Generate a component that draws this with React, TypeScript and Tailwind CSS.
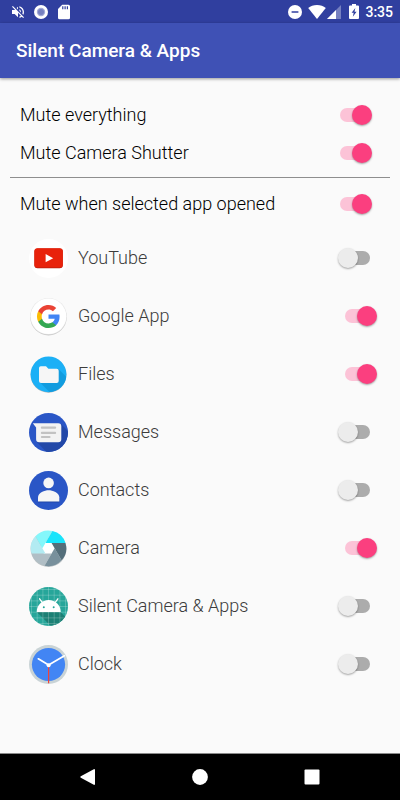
import { useState, type ReactNode } from 'react';

function YouTubeIcon() {
  return (
    <svg viewBox="0 0 39 39" className="size-full">
      <circle cx="19.5" cy="19.5" r="19.5" fill="#fff" />
      <rect x="5.4" y="9.6" width="28.4" height="19.6" rx="3.2" fill="#b71c0c" />
      <rect x="5.4" y="9.2" width="28.4" height="19.4" rx="3.2" fill="#e8220b" />
      <path d="M16.6 15.1v8.2l7.6-4.1z" fill="#fff" />
    </svg>
  );
}

function GoogleIcon() {
  return (
    <svg viewBox="0 0 39 39" className="size-full">
      <circle cx="19.5" cy="20.2" r="18.2" fill="#c8c8c8" />
      <circle cx="19.5" cy="19.3" r="18.3" fill="#e8e8e8" />
      <circle cx="19.5" cy="19.3" r="17.8" fill="#fff" />
      <g transform="translate(6.9 6.9) scale(1.05)">
        <path fill="#4285f4" d="M22.56 12.25c0-.78-.07-1.53-.2-2.25H12v4.26h5.92c-.26 1.37-1.04 2.53-2.21 3.31v2.77h3.57c2.08-1.92 3.28-4.74 3.28-8.09z" />
        <path fill="#34a853" d="M12 23c2.97 0 5.46-.98 7.28-2.66l-3.57-2.77c-.98.66-2.23 1.06-3.71 1.06-2.86 0-5.29-1.93-6.16-4.53H2.18v2.84C3.99 20.53 7.7 23 12 23z" />
        <path fill="#fbbc05" d="M5.84 14.09c-.22-.66-.35-1.36-.35-2.09s.13-1.43.35-2.09V7.07H2.18C1.43 8.55 1 10.22 1 12s.43 3.45 1.18 4.93l3.66-2.84z" />
        <path fill="#ea4335" d="M12 5.38c1.62 0 3.06.56 4.21 1.64l3.15-3.15C17.45 2.09 14.97 1 12 1 7.7 1 3.99 3.47 2.18 7.07l3.66 2.84c.87-2.6 3.3-4.53 6.16-4.53z" />
      </g>
    </svg>
  );
}

function FilesIcon() {
  return (
    <svg viewBox="0 0 39 39" className="size-full">
      <clipPath id="files-clip">
        <circle cx="19.5" cy="19.3" r="17.9" />
      </clipPath>
      <circle cx="19.5" cy="19.8" r="17.9" fill="#a9b4b8" />
      <g clipPath="url(#files-clip)">
        <rect width="39" height="39" fill="#1cb0f6" />
        <path d="M10.5 27 29.5 14l12 12v14H23.5z" fill="#129cdf" />
        <path d="M11.8 11.2H17l2.4 2.5h8.3a2 2 0 0 1 2 2v10.4a2 2 0 0 1-2 2H12a2 2 0 0 1-2-2V13a1.8 1.8 0 0 1 1.8-1.8z" fill="#f6f6f6" />
      </g>
    </svg>
  );
}

function MessagesIcon() {
  return (
    <svg viewBox="0 0 39 39" className="size-full">
      <clipPath id="messages-clip">
        <circle cx="19.5" cy="19.5" r="19.5" />
      </clipPath>
      <g clipPath="url(#messages-clip)">
        <rect width="39" height="39" fill="#2a56c6" />
        <path d="M7.5 28.5 32 11l12 12v20H21z" fill="#2248a8" />
        <path d="M3.8 10.2h25.5a3 3 0 0 1 3 3v13.1a3 3 0 0 1-3 3H10.1a3 3 0 0 1-3-3V14.6z" fill="#f3f3f3" />
        <path d="M12.9 14.7h13.2M12.9 19.9h13.2M12.9 24h7.6" stroke="#c2c2c2" strokeWidth="2.2" strokeLinecap="round" />
      </g>
    </svg>
  );
}

function ContactsIcon() {
  return (
    <svg viewBox="0 0 39 39" className="size-full">
      <circle cx="19.5" cy="19.5" r="19.5" fill="#2a56c6" />
      <path d="M9 31.3h21.3v-1H9z" fill="#1d3f96" />
      <circle cx="19.6" cy="11.9" r="5.3" fill="#f6f6f6" />
      <path d="M9 30.6v-4.4c0-4.6 6.8-7 10.6-7s10.7 2.4 10.7 7v4.4z" fill="#f6f6f6" />
    </svg>
  );
}

const blades = ['#18e4fb', '#546e7a', '#78909c', '#b0bec5', '#b2ebf2', '#84f7fb'];

function CameraIcon() {
  return (
    <svg viewBox="0 0 39 39" className="size-full">
      <circle cx="19.5" cy="20" r="17.9" fill="#b9c0c3" />
      <g transform="translate(19.5 19.3)">
        <circle r="7" fill="#fff" />
        {blades.map((fill, i) => (
          <path
            key={fill}
            d="M-3.06-5.3H17A17.8 17.8 0 0 0 3.9-17.3z"
            fill={fill}
            transform={`rotate(${i * 60})`}
          />
        ))}
      </g>
    </svg>
  );
}

function AndroidIcon() {
  return (
    <svg viewBox="0 0 39 39" className="size-full">
      <clipPath id="android-clip">
        <circle cx="19.5" cy="19.5" r="19.5" />
      </clipPath>
      <g clipPath="url(#android-clip)">
        <rect width="39" height="39" fill="#26a69a" />
        <path d="M7.8 25H31.5L40 33.5V40H22.8z" fill="#1c8075" />
        <path
          d="M2.5 0v39M8.2 0v39M13.9 0v39M19.5 0v39M25.2 0v39M30.9 0v39M36.5 0v39M0 2.5h39M0 8.2h39M0 13.9h39M0 19.5h39M0 25.2h39M0 30.9h39M0 36.5h39"
          stroke="#fff"
          strokeOpacity=".3"
          strokeWidth=".7"
        />
        <path d="m10.6 11.8 3.4 4.6M28.9 11.8l-3.4 4.6" stroke="#fff" strokeWidth="1.3" strokeLinecap="round" />
        <path d="M7.7 25.1c0-7 5.2-12 12-12s12 5 12 12z" fill="#fff" />
        <circle cx="14.8" cy="20.3" r="1" fill="#26a69a" />
        <circle cx="24.7" cy="20.3" r="1" fill="#26a69a" />
      </g>
    </svg>
  );
}

function ClockIcon() {
  return (
    <svg viewBox="0 0 39 39" className="size-full">
      <circle cx="19.5" cy="19.5" r="19.5" fill="#c9d3d6" />
      <circle cx="19.5" cy="19.5" r="16.6" fill="#4285f4" />
      <path d="M19.6 20.3v18" stroke="#f0433a" strokeWidth="1.2" />
      <path d="m9.3 13.8 10.3 6.3 15.8-9.3" fill="none" stroke="#fff" strokeWidth="1.7" strokeLinecap="round" />
      <circle cx="19.6" cy="20.3" r="2" fill="#fff" />
    </svg>
  );
}

const globals = ['Mute everything', 'Mute Camera Shutter'];

const apps = [
  { name: 'YouTube', icon: YouTubeIcon, muted: false },
  { name: 'Google App', icon: GoogleIcon, muted: true },
  { name: 'Files', icon: FilesIcon, muted: true },
  { name: 'Messages', icon: MessagesIcon, muted: false },
  { name: 'Contacts', icon: ContactsIcon, muted: false },
  { name: 'Camera', icon: CameraIcon, muted: true },
  { name: 'Silent Camera & Apps', icon: AndroidIcon, muted: false },
  { name: 'Clock', icon: ClockIcon, muted: false },
];

function Switch({ id, initial, className = '' }: { id: string; initial: boolean; className?: string }) {
  const [on, setOn] = useState(initial);
  return (
    <input
      id={id}
      type="checkbox"
      role="switch"
      checked={on}
      onChange={(e) => setOn(e.target.checked)}
      className={`relative h-5 w-[34px] shrink-0 cursor-pointer appearance-none before:absolute before:top-[3px] before:right-0.5 before:left-0.5 before:h-3.5 before:rounded-full before:bg-[#acacac] after:absolute after:top-0 after:left-0 after:size-5 after:rounded-full after:bg-[#ececec] after:shadow-[0_1px_2px_rgba(0,0,0,0.35)] checked:before:bg-[#fcc3d7] checked:after:left-3.5 checked:after:bg-[#fb3f7f] ${className}`}
    />
  );
}

function SettingRow({ label }: { label: string }) {
  const id = label.toLowerCase().replaceAll(' ', '-');
  return (
    <div className="flex h-[38px] items-center justify-between pr-7 pl-5">
      <label htmlFor={id} className="text-lg font-light text-black">{label}</label>
      <Switch id={id} initial />
    </div>
  );
}

function StatusBar() {
  return (
    <div className="flex h-[23px] items-center justify-between bg-[#303f9f] pr-[7px] pl-2.5 text-white">
      <div className="flex items-center gap-2">
        <svg viewBox="0 0 24 24" className="size-4" fill="currentColor">
          <path d="M16.5 12c0-1.77-1.02-3.29-2.5-4.03v2.21l2.45 2.45c.03-.2.05-.41.05-.63zm2.5 0c0 .94-.2 1.82-.54 2.64l1.51 1.51C20.63 14.91 21 13.5 21 12c0-4.28-2.99-7.86-7-8.77v2.06c2.89.86 5 3.54 5 6.71zM4.27 3 3 4.27 7.73 9H3v6h4l5 5v-6.73l4.25 4.25c-.67.52-1.42.93-2.25 1.18v2.06c1.38-.31 2.63-.95 3.69-1.81L19.73 21 21 19.73l-9-9L4.27 3zM12 4 9.91 6.09 12 8.18V4z" />
        </svg>
        <svg viewBox="0 0 14 14" className="size-3.5">
          <circle cx="7" cy="7" r="7" fill="#fff" />
          <circle cx="7" cy="7" r="4.2" fill="#a3aad6" />
          <circle cx="7" cy="7" r="3" fill="#7680c0" />
        </svg>
        <svg viewBox="0 0 16 16" className="size-4">
          <path d="M6.2.8h6.3A1.5 1.5 0 0 1 14 2.3v11.4a1.5 1.5 0 0 1-1.5 1.5h-9A1.5 1.5 0 0 1 2 13.7V5z" fill="#fff" />
          <path d="M6.8 2.2v3M9.1 2.2v3M11.4 2.2v3" stroke="#303f9f" strokeWidth="1.2" />
        </svg>
      </div>
      <div className="flex items-center">
        <svg viewBox="0 0 14 14" className="size-3.5">
          <circle cx="7" cy="7" r="7" fill="#fff" />
          <path d="M3.6 7h6.8" stroke="#303f9f" strokeWidth="1.5" />
        </svg>
        <svg viewBox="0 0 18 14" className="ml-1.5 h-3.5 w-[18px]">
          <path d="M9 14 .2 3C2.5 1 5.5 0 9 0s6.5 1 8.8 3z" fill="#fff" />
        </svg>
        <svg viewBox="0 0 14 14" className="ml-px size-3.5">
          <path d="M0 14 14 0v14z" fill="#7680c0" />
          <path d="M0 14 9 5v9z" fill="#fff" />
        </svg>
        <svg viewBox="0 0 10 15" className="ml-2 h-[15px] w-2.5">
          <path d="M3 0h4v1.5h2a1 1 0 0 1 1 1V14a1 1 0 0 1-1 1H1a1 1 0 0 1-1-1V2.5a1 1 0 0 1 1-1h2z" fill="#fff" />
          <path d="M6.3 4 2.6 8.8h2.1l-.9 4 3.8-5H5.5z" fill="#303f9f" />
        </svg>
        <time className="ml-1.5 text-sm leading-5 font-medium">3:35</time>
      </div>
    </div>
  );
}

function NavButton({ label, children }: { label: string; children: ReactNode }) {
  return (
    <button type="button" aria-label={label} className="flex h-full flex-1 items-center justify-center">
      <svg viewBox="0 0 16 16" className="size-4" fill="#fff">{children}</svg>
    </button>
  );
}

export default function App() {
  return (
    <div className="flex min-h-screen flex-col bg-[#fafafa] font-[Roboto,sans-serif]">
      <StatusBar />
      <header className="flex h-[55px] items-center bg-[#3f51b5] px-4 pt-0.5 shadow-[0_1px_3px_rgba(0,0,0,0.4)]">
        <h1 className="text-[19px] font-medium text-white">Silent Camera &amp; Apps</h1>
      </header>

      <main className="flex-1 pt-[18px]">
        {globals.map((label) => (
          <SettingRow key={label} label={label} />
        ))}
        <hr className="mx-2.5 mt-[5px] mb-[7px] border-[#8e8e8e]" />
        <SettingRow label="Mute when selected app opened" />

        <ul className="mt-1.5">
          {apps.map((app, i) => (
            <li key={app.name} className="flex h-[58px] items-center pr-[23px] pl-[29px]">
              <span className="size-[39px] shrink-0">
                <app.icon />
              </span>
              <label htmlFor={`app-${i}`} className="ml-2.5 flex-1 text-lg font-light text-[#3c3c3c]">{app.name}</label>
              <Switch id={`app-${i}`} initial={app.muted} className="mr-[5px] checked:mr-0" />
            </li>
          ))}
        </ul>
      </main>

      <nav className="flex h-[47px] border-t border-[#8a8a8a] bg-black px-8">
        <NavButton label="Back">
          <path d="M.8 7.3 13.8.2a.8.8 0 0 1 1.2.7v14.2a.8.8 0 0 1-1.2.7L.8 8.7a.8.8 0 0 1 0-1.4z" />
        </NavButton>
        <NavButton label="Home">
          <circle cx="8" cy="8" r="7.9" />
        </NavButton>
        <NavButton label="Recent apps">
          <rect x=".5" y=".5" width="15" height="15" rx="1" />
        </NavButton>
      </nav>
    </div>
  );
}
